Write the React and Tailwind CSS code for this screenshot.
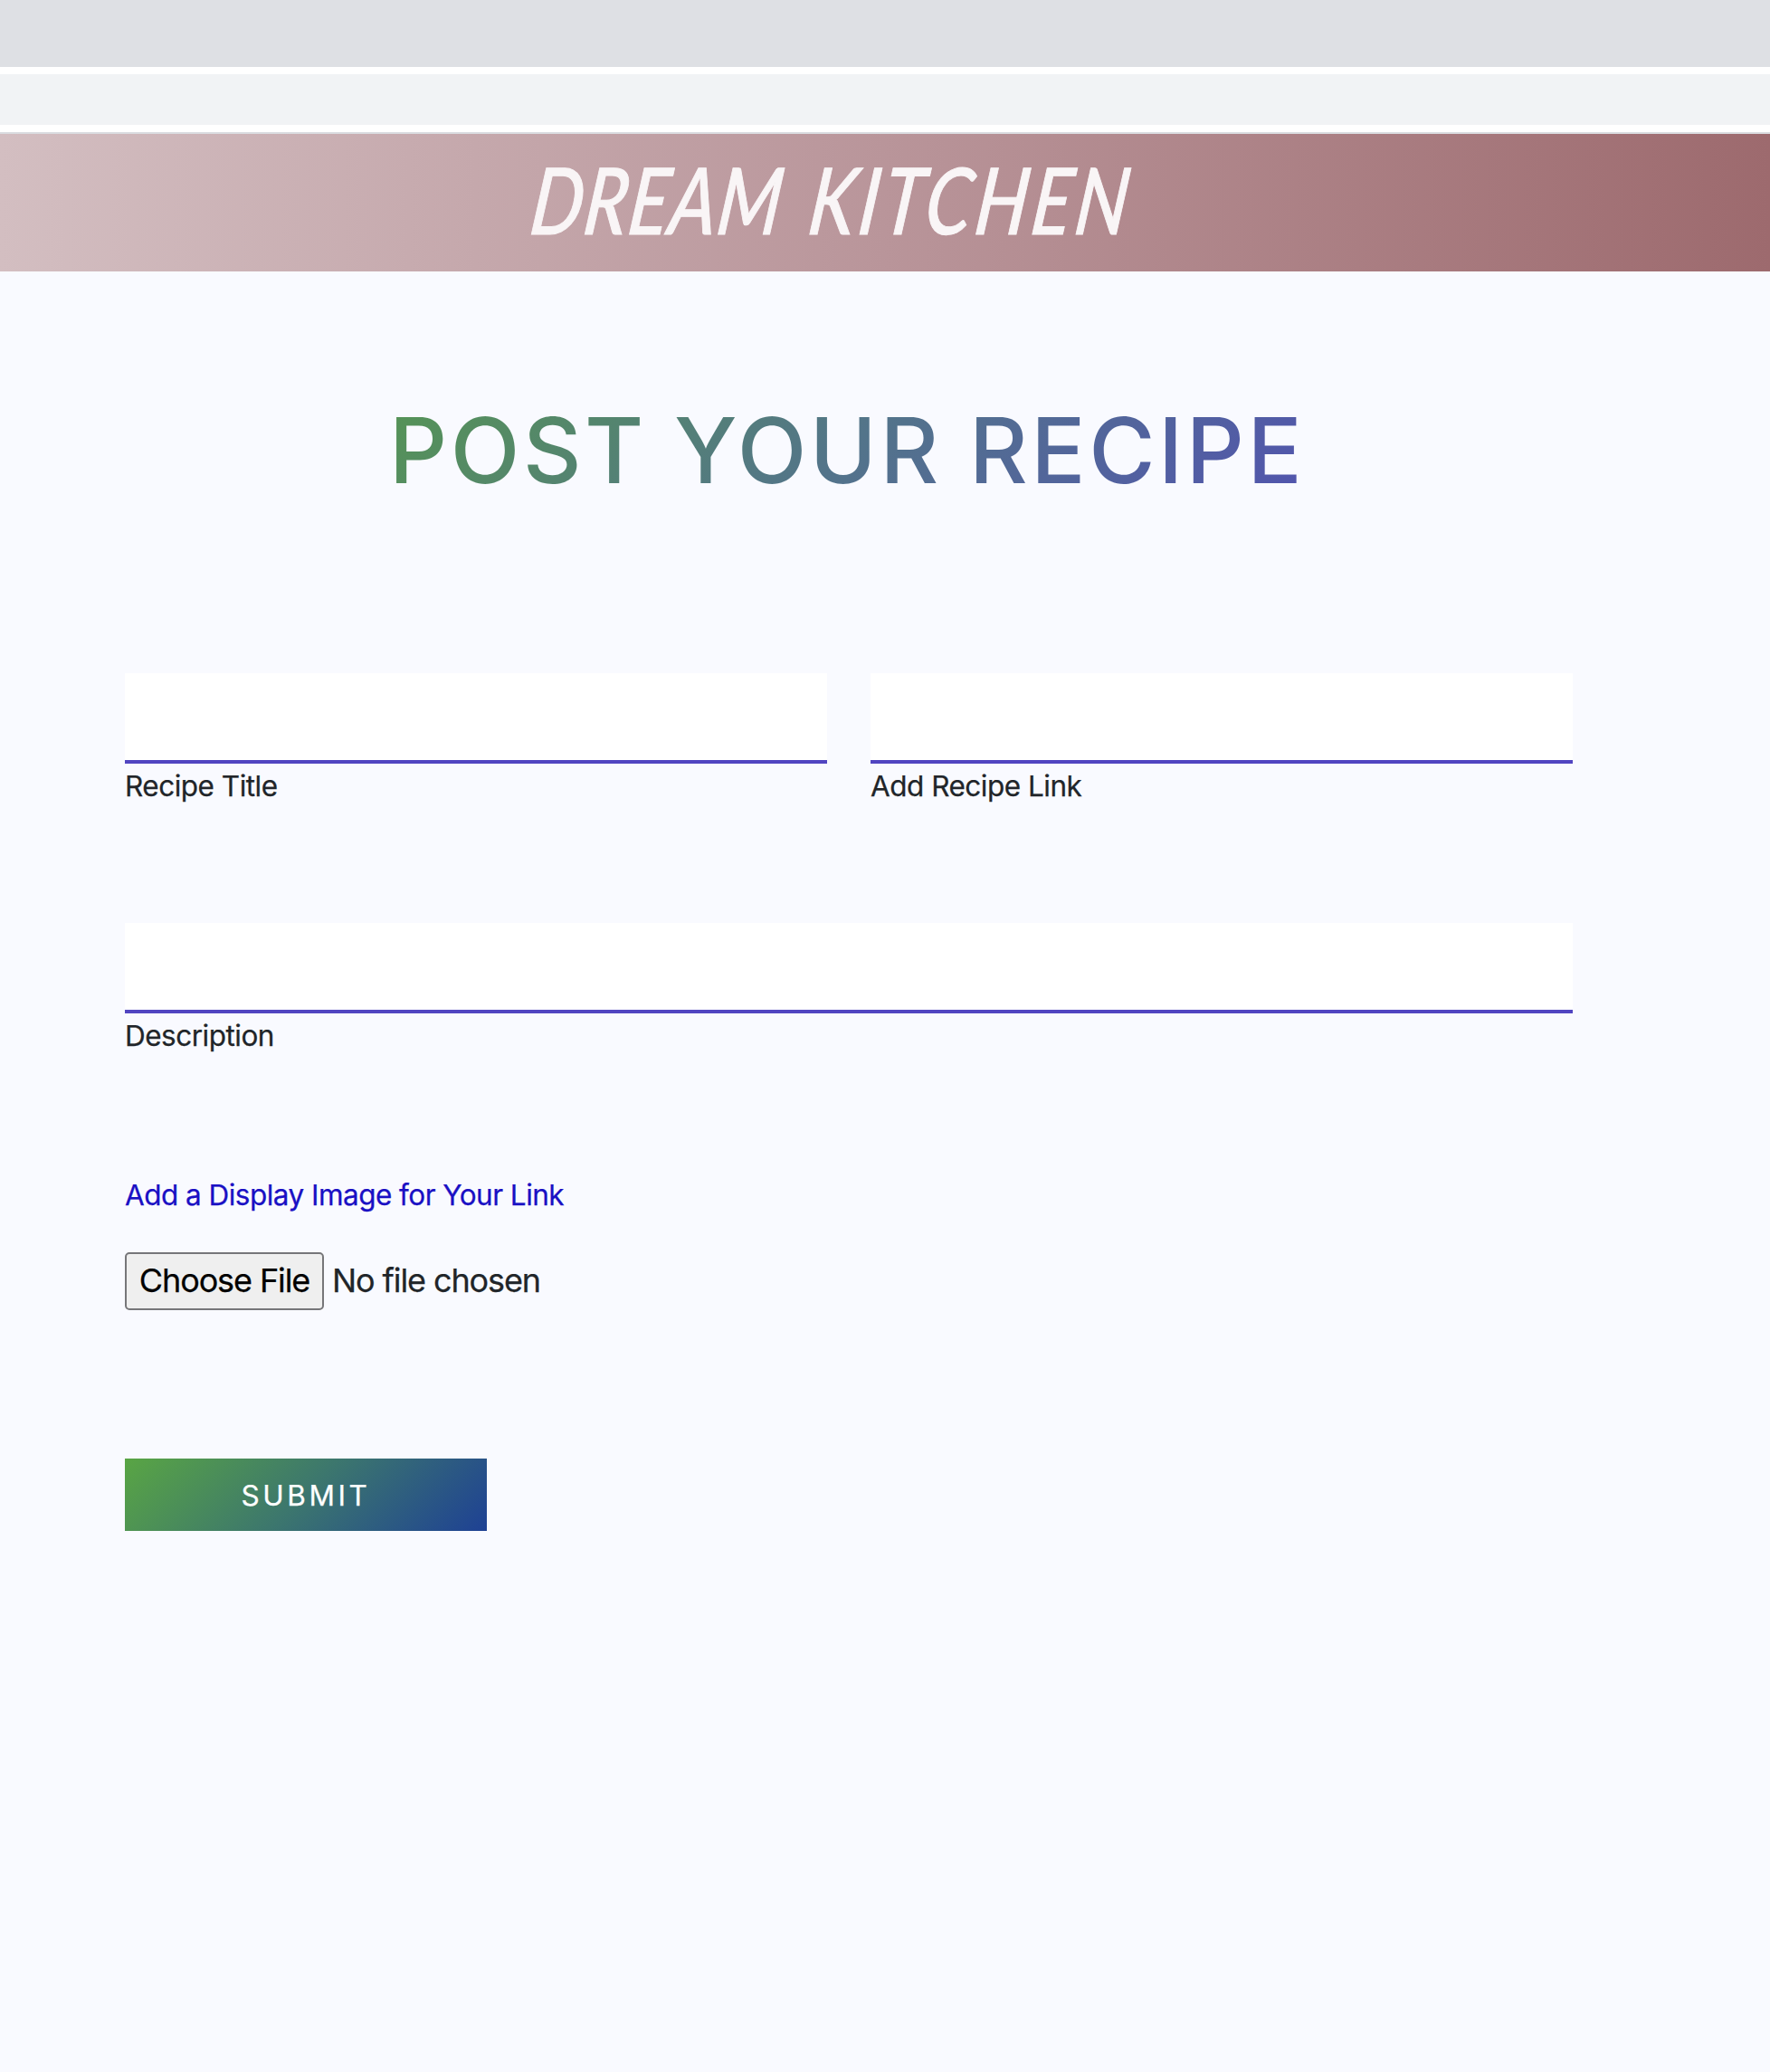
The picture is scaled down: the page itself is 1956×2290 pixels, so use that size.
function Field({ label, id }) {
  return (
    <div>
      <input
        id={id}
        type="text"
        className="block h-[100px] w-full border-b-4 border-[#5145c1] bg-white px-4 text-[31px] outline-none"
      />
      <label htmlFor={id} className="mt-px block h-12 text-[31.5px] leading-[48px] tracking-[-0.5px] text-[#212529] [-webkit-text-stroke:0.25px_#212529]">
        {label}
      </label>
    </div>
  );
}

export default function App() {
  return (
    <div className="min-h-[2290px] bg-[#f9faff] font-['Inter','Liberation_Sans',sans-serif]">
      <div className="h-[74px] bg-[#dee0e4]" />
      <div className="h-2 bg-white" />
      <div className="h-14 bg-[#f1f3f5]" />
      <div className="h-2 bg-white" />
      <header className="flex h-[154px] border-t-2 border-[#dadce0] bg-[linear-gradient(90deg,#d3bec1,#b9959a_50%,#9d6a6e)] pl-[584px]">
        <div className="h-[144px] origin-[0_108px] -skew-x-[9deg] scale-x-[0.8] whitespace-nowrap font-['Lato',sans-serif] text-[102px] leading-[144px] font-medium text-[#f9f5f6] italic [-webkit-text-stroke:1px_#f9f5f6]">
          <span className="tracking-[1.5px]">DREAM</span>
          <span className="[word-spacing:13px]"> </span>
          <span className="tracking-[5.3px]">KITCHEN</span>
        </div>
      </header>
      <main className="w-[1738px] pl-[138px] pt-[138px]">
        <h1 className="ml-[292px] h-[120px] w-[1010px] whitespace-nowrap bg-[linear-gradient(135deg,#559455,#53748a_50%,#5154ae)] bg-clip-text text-[100px] leading-[120px] font-medium tracking-[3.55px] text-transparent">
          POST YOUR RECIPE
        </h1>
        <form className="pt-[186px]">
          <div className="grid grid-cols-2 gap-12">
            <Field id="title" label="Recipe Title" />
            <Field id="link" label="Add Recipe Link" />
          </div>
          <div className="pt-[127px]">
            <Field id="description" label="Description" />
          </div>
          <p className="mt-32 h-12 text-[31.5px] leading-[48px] tracking-[-0.53px] text-[#1a10c4] [-webkit-text-stroke:0.25px_#1a10c4]">
            <span>Add a Display Image for Your Link</span>
          </p>
          <div className="mt-[39px] flex h-16 items-center text-[36px] leading-[56px] tracking-[-1.1px]">
            <button
              type="button"
              className="h-16 w-[220px] whitespace-nowrap rounded-[5px] border-2 border-[#767679] bg-[#efefef] pb-0.5 text-black [-webkit-text-stroke:0.25px_#000]"
            >
              Choose File
            </button>
            <span className="ml-[9px] pb-0.5 text-[#212529] [-webkit-text-stroke:0.25px_#212529]">No file chosen</span>
          </div>
          <button
            type="submit"
            className="mt-[164px] block h-20 w-[400px] bg-[linear-gradient(135deg,#59a544,#3c766e_50%,#1e4194)] pt-0.5 text-[31.5px] tracking-[3.6px] text-white [-webkit-text-stroke:0.25px_#fff]"
          >
            SUBMIT
          </button>
        </form>
      </main>
    </div>
  );
}
